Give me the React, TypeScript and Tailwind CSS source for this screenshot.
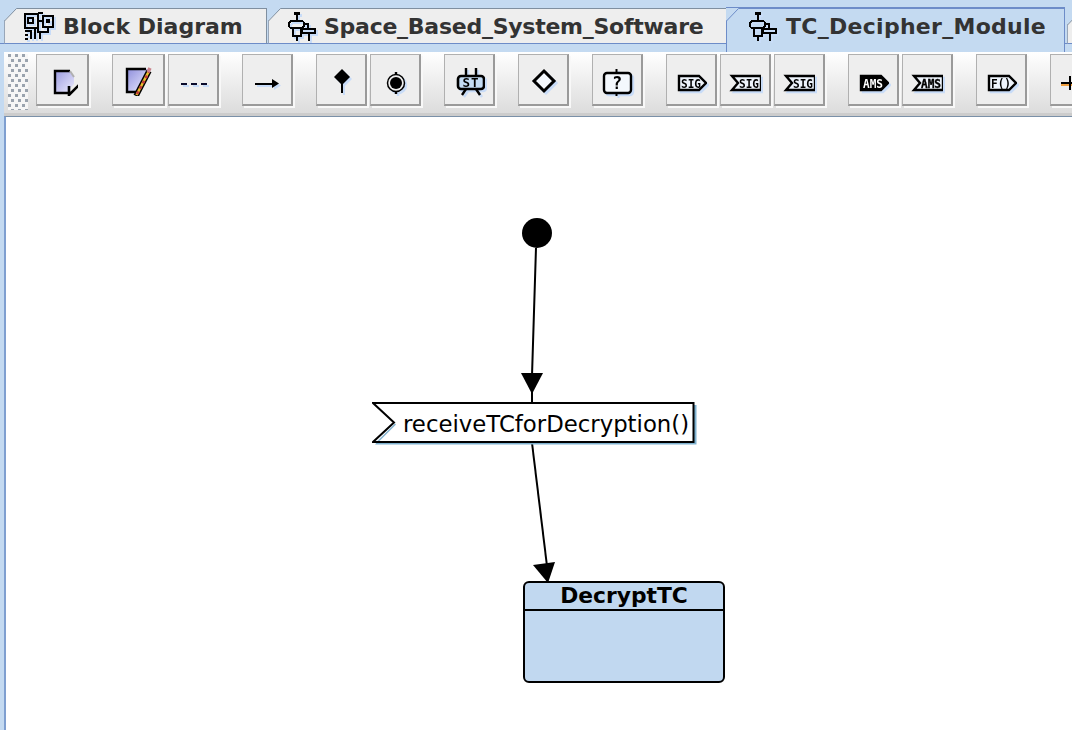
import React from "react";

const mono = { fontFamily: '"DejaVu Sans Mono", monospace', fontWeight: 700 } as const;

function Corner({ line }: { line: string }) {
  return (
    <svg className="absolute left-[-1px] top-[-1px]" width="14" height="14" viewBox="0 0 14 14">
      <polygon points="0,0 13,0 0,13" fill="#c4daf1" />
      <line x1="0.5" y1="13" x2="12.5" y2="0.5" stroke={line} strokeWidth="1" />
    </svg>
  );
}

function BlockIcon() {
  return (
    <svg width="30" height="28" viewBox="0 0 30 28" shapeRendering="crispEdges" className="drop-shadow-[2px_2px_0_#c8dcf8]">
      <g fill="none" stroke="#000" strokeWidth="2">
        <rect x="1" y="2" width="13" height="14" />
        <rect x="4" y="6" width="5" height="5" />
        <rect x="19" y="4" width="10" height="11" />
        <path d="M14 9H19M24 15V20H14V1M1 19H7V27M1 23H4M11 16V27M1 27H4M16 20V27" />
        <path d="M14 1H19" />
      </g>
      <rect x="22" y="7" width="4" height="4" fill="#000" />
    </svg>
  );
}

function SystemIcon() {
  return (
    <svg width="28" height="29" viewBox="0 0 28 29" shapeRendering="crispEdges" className="drop-shadow-[2px_2px_0_#c8dcf8]">
      <g fill="none" stroke="#000" strokeWidth="2">
        <path d="M6 1.5H12" strokeWidth="3" />
        <path d="M9 2V9" />
        <rect x="1" y="9" width="15" height="7" rx="3" />
        <rect x="5" y="16" width="8" height="8" />
        <path d="M9 24V29" />
        <path d="M16 12H20V17" />
        <rect x="14" y="17" width="13" height="4" />
        <path d="M21 21V29" />
      </g>
    </svg>
  );
}

const Pent = ({ label, dark }: { label: string; dark?: boolean }) => (
  <svg width="32" height="32" viewBox="0 0 32 32" className="drop-shadow-[2px_2px_0_#c8dcf8]">
    <polygon points="4,12 24,12 31,19 24,26 4,26" fill={dark ? "#000" : "#eef4fc"} stroke="#000" strokeWidth="2.4" />
    <text x="6" y="23.5" textLength="20" lengthAdjust="spacingAndGlyphs" fontSize="13" fill={dark ? "#fff" : "#000"} style={mono}>{label}</text>
  </svg>
);

const Recv = ({ label, heavy }: { label: string; heavy?: boolean }) => (
  <svg width="32" height="32" viewBox="0 0 32 32" className="drop-shadow-[2px_2px_0_#c8dcf8]">
    <polygon points="3,12 32,12 32,26 3,26 9,19" fill="#eef4fc" stroke="#000" strokeWidth="2.4" />
    <text x="10" y="23.5" textLength="20" lengthAdjust="spacingAndGlyphs" fontSize="13" fill="#000" stroke={heavy ? "#000" : "none"} strokeWidth="0.4" style={mono}>{label}</text>
  </svg>
);

const Svg = ({ children }: { children: React.ReactNode }) => (
  <svg width="32" height="32" viewBox="0 0 32 32" className="drop-shadow-[2px_2px_0_#c8dcf8]">
    {children}
  </svg>
);

const icons: React.ReactNode[][] = [
  [
    <svg key="a" width="32" height="32" viewBox="0 0 32 32">
      <defs>
        <linearGradient id="docA" x1="0" y1="0" x2="1" y2="1">
          <stop offset="0" stopColor="#9a9ade" />
          <stop offset="1" stopColor="#ecebff" />
        </linearGradient>
      </defs>
      <polygon points="9,7 24,7 28,13 28,20 21,28 9,28" fill="url(#docA)" />
      <path d="M22 29H9V7H24" fill="none" stroke="#000" strokeWidth="2.4" />
      <path d="M24 7L28 13" stroke="#b0b0b0" strokeWidth="2" />
      <path d="M23 22V31L34 20" fill="none" stroke="#000" strokeWidth="2.6" />
    </svg>,
  ],
  [
    <svg key="b" width="32" height="32" viewBox="0 0 32 32">
      <defs>
        <linearGradient id="docB" x1="0" y1="0" x2="1" y2="1">
          <stop offset="0" stopColor="#8f8fdc" />
          <stop offset="1" stopColor="#ecebff" />
        </linearGradient>
      </defs>
      <polygon points="5,5 26,5 18,27 5,27" fill="url(#docB)" />
      <path d="M16 28H5V5H24" fill="none" stroke="#000" strokeWidth="2.4" />
      <path d="M14 32L27 7" stroke="#000" strokeWidth="5.5" />
      <path d="M14.5 31L27 7" stroke="#e8c02a" strokeWidth="2.6" />
      <path d="M15 30L27 8" stroke="#c23a3a" strokeWidth="2.6" strokeDasharray="3 3" />
      <path d="M26 8L28 4" stroke="#c8808a" strokeWidth="3.5" />
    </svg>,
    <Svg key="c">
      <path d="M4 19.5H10M14 19.5H20M24 19.5H30" stroke="#0a0a2a" strokeWidth="2" shapeRendering="crispEdges" />
    </Svg>,
  ],
  [
    <Svg key="d">
      <path d="M4 19.5H26" stroke="#000" strokeWidth="2" shapeRendering="crispEdges" />
      <polygon points="21,15 28,19.5 21,24" fill="#000" />
    </Svg>,
  ],
  [
    <Svg key="e">
      <polygon points="17,5 25,13 17,21 9,13" fill="#000" />
      <path d="M17 18V29" stroke="#000" strokeWidth="2" shapeRendering="crispEdges" />
    </Svg>,
    <Svg key="f">
      <circle cx="17" cy="19" r="8.5" fill="#eeeeee" stroke="#000" strokeWidth="1.5" />
      <circle cx="17" cy="19" r="6" fill="#000" />
      <path d="M17 8V11M17 27V30" stroke="#000" strokeWidth="2.4" />
    </Svg>,
  ],
  [
    <Svg key="g">
      <path d="M13 4V12M23 4V12M13 25L9 31M23 25L27 31" stroke="#000" strokeWidth="2.4" />
      <rect x="5" y="12" width="26" height="13" rx="3" fill="#c4dcf4" stroke="#000" strokeWidth="2.6" />
      <text x="18" y="23" textAnchor="middle" fontSize="12.5" letterSpacing="1" fill="#000" style={mono}>ST</text>
    </Svg>,
  ],
  [
    <Svg key="h">
      <polygon points="17,7 27,17 17,27 7,17" fill="#f4f8fd" stroke="#000" strokeWidth="3" />
    </Svg>,
  ],
  [
    <Svg key="i">
      <path d="M15.5 5V9M15.5 29V33" stroke="#000" strokeWidth="2" />
      <rect x="3" y="9" width="27" height="20" rx="3" fill="#f4f8fd" stroke="#000" strokeWidth="2.4" />
      <text x="16" y="25" textAnchor="middle" fontSize="17" fill="#000" style={mono}>?</text>
    </Svg>,
  ],
  [<Pent key="j" label="SIG" />, <Recv key="k" label="SIG" />, <Recv key="l" label="SIG" />],
  [<Pent key="m" label="AMS" dark />, <Recv key="n" label="AMS" heavy />],
  [<Pent key="o" label="F()" />],
  [
    <svg key="p" width="32" height="32" viewBox="0 0 32 32" shapeRendering="crispEdges">
      <path d="M2 18.5H32" stroke="#000" strokeWidth="2" />
      <path d="M2 20.5H32" stroke="#f0a040" strokeWidth="2" />
      <path d="M11 12V26" stroke="#000" strokeWidth="2" />
    </svg>,
  ],
];

function ToolButton({ wide, children }: { wide: boolean; children: React.ReactNode }) {
  return (
    <div
      className={`${wide ? "w-[53px]" : "w-[51px]"} h-[52px] shrink-0 flex items-center justify-center bg-[#eeeeee] border-t border-l border-t-[#b0b0b0] border-l-[#b0b0b0] border-r-2 border-b-2 border-r-[#9a9a9a] border-b-[#9a9a9a] shadow-[2px_2px_0_#f8f8f8]`}
    >
      {children}
    </div>
  );
}

function Grip() {
  const dots = Array.from({ length: 36 });
  return (
    <div className="w-[20px] h-[56px] shrink-0 mr-[8px] grid grid-cols-[repeat(3,7px)] auto-rows-[5px] overflow-hidden bg-[#f6f6f6]">
      {dots.map((_, i) => (
        <div key={i} className={`w-[3px] h-[3px] bg-[#9aa3ae] ${Math.floor(i / 3) % 2 ? "ml-[3px]" : ""}`} />
      ))}
    </div>
  );
}

export default function App() {
  const label = "text-[22px] leading-[36px] font-bold text-[#333333] whitespace-nowrap pt-[2px] [font-family:'DejaVu_Sans',sans-serif]";
  return (
    <div className="w-[1072px] h-[730px] overflow-hidden bg-white flex flex-col [font-family:'DejaVu_Sans',sans-serif]">
      {/* tabs */}
      <div className="h-[52px] shrink-0 flex items-start bg-[#c4daf1]">
        <div className="w-[4px] h-[44px] shrink-0 border-b border-[#6d8cc8]" />
        <div className="relative mt-[8px] w-[263px] h-[36px] shrink-0 flex items-center gap-[9px] pl-[19px] bg-[#eeeeee] border-t border-r border-l border-b border-t-[#7f8fa0] border-r-[#7f8fa0] border-l-[#98a6b8] border-b-[#6d8cc8]">
          <Corner line="#7f8fa0" />
          <BlockIcon />
          <span className={label}>Block Diagram</span>
        </div>
        <div className="w-[1px] h-[44px] shrink-0 border-b border-[#6d8cc8]" />
        <div className="relative mt-[8px] w-[458px] h-[36px] shrink-0 flex items-center gap-[8px] pl-[19px] bg-[#eeeeee] border-t border-l border-b border-t-[#7f8fa0] border-l-[#98a6b8] border-b-[#6d8cc8]">
          <Corner line="#7f8fa0" />
          <SystemIcon />
          <span className={`${label} tracking-[-0.26px]`}>Space_Based_System_Software</span>
        </div>
        <div className="relative mt-[7px] w-[339px] h-[45px] shrink-0 flex items-center gap-[9px] pl-[22px] pb-[9px] bg-[#c4daf1] border-t-2 border-r border-l border-[#6d8cc8]">
          <Corner line="#6d8cc8" />
          <SystemIcon />
          <span className={`${label} tracking-[0.28px]`}>TC_Decipher_Module</span>
        </div>
        <div className="w-[2px] h-[44px] shrink-0 border-b border-[#6d8cc8]" />
        <div className="relative mt-[12px] w-[20px] h-[32px] shrink-0 bg-[#eeeeee] border-t border-l border-b border-t-[#7f8fa0] border-l-[#98a6b8] border-b-[#6d8cc8]">
          <Corner line="#7f8fa0" />
        </div>
      </div>

      {/* toolbar */}
      <div className="flex-1 flex flex-col pl-[4px] bg-[#c4daf1]">
        <div className="h-[61px] shrink-0 flex items-start pl-[4px] pt-[2px] bg-gradient-to-b from-[#ffffff] to-[#dcdcdc]">
          <Grip />
          <div className="flex gap-[23px]">
            {icons.map((group, g) => (
              <div key={g} className="flex gap-[3px]">
                {group.map((ic, i) => (
                  <ToolButton key={i} wide={g === 0 || (g === 1 && i === 0)}>
                    {ic}
                  </ToolButton>
                ))}
              </div>
            ))}
          </div>
        </div>
        <div className="h-[3px] shrink-0 bg-[#cccccc]" />
        {/* canvas */}
        <div className="relative flex-1 bg-white border-t border-l-2 border-t-[#7a90a8] border-l-[#7f9fd0]">
          <svg className="absolute left-[-6px] top-[-117px]" width="1072" height="730" viewBox="0 0 1072 730">
            <circle cx="537" cy="233" r="15" fill="#000" />
            <path d="M536 248L532 376" stroke="#000" strokeWidth="2" />
            <polygon points="521,373 543,373 532,394" fill="#000" />
            <path d="M532 392V403" stroke="#000" strokeWidth="2" />
            <path d="M532 443L547 566" stroke="#000" strokeWidth="2" />
            <polygon points="533,565 555,562 548,583" fill="#000" />
          </svg>

          <div className="absolute left-[366px] top-[285px] w-[325px] h-[44px] flex items-center">
            <svg className="absolute inset-0" width="325" height="44" viewBox="0 0 325 44">
              <polygon points="3,3 324.5,3 324.5,42.5 3,42.5 24,22" fill="#7fb2d0" />
              <polygon points="1,1 321.5,1 321.5,40 1,40 22,20.5" fill="#fff" />
              <path d="M23.5 22L4 41.5" stroke="#7fb2d0" strokeWidth="1.5" />
              <polygon points="1,1 321.5,1 321.5,40 1,40 22,20.5" fill="none" stroke="#000" strokeWidth="2" />
            </svg>
            <span className="relative ml-[31px] text-[22.8px] leading-[42px] text-black whitespace-nowrap [font-family:'DejaVu_Sans',sans-serif]">
              receiveTCforDecryption()
            </span>
          </div>

          <div className="absolute left-[517px] top-[464px] w-[202px] h-[102px] flex flex-col rounded-[6px] border-2 border-black bg-[#c1d8f0]">
            <div className="h-[28px] shrink-0 border-b-2 border-black flex items-center justify-center text-[21.8px] font-bold text-black [font-family:'DejaVu_Sans',sans-serif]">
              DecryptTC
            </div>
          </div>
        </div>
      </div>
    </div>
  );
}
